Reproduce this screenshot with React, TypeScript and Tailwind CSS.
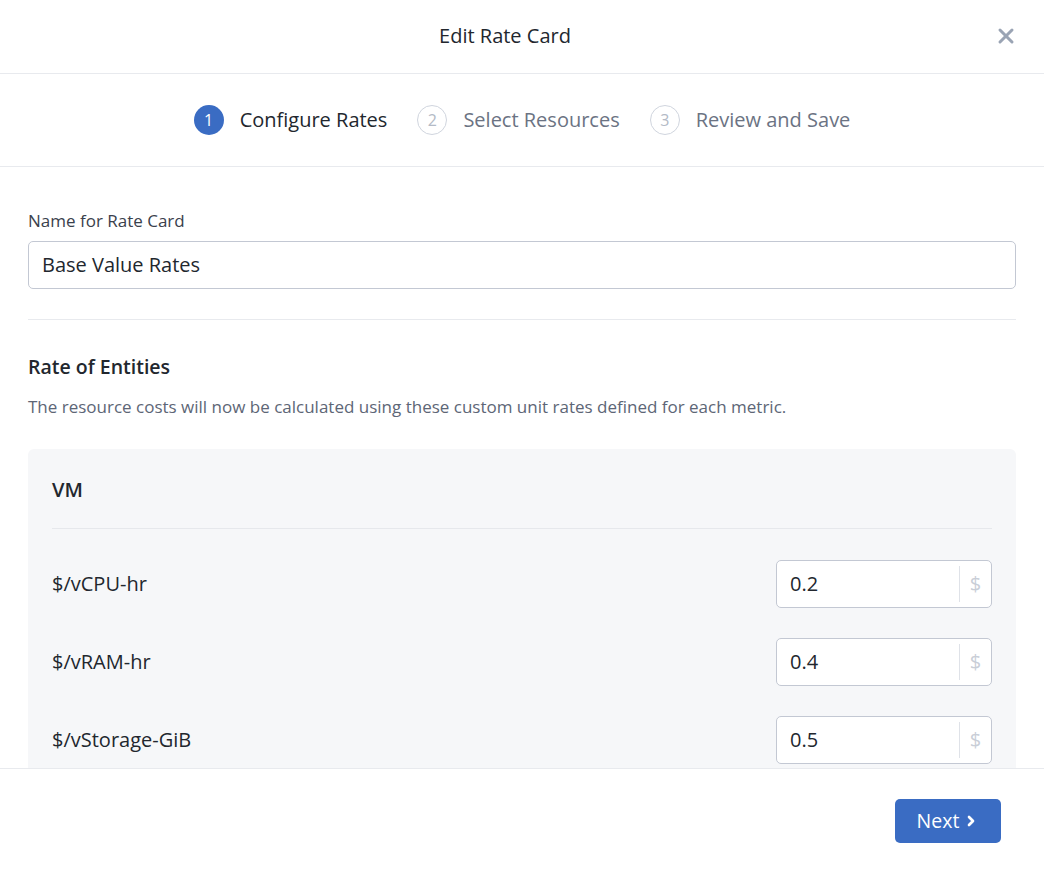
import { X, ChevronRight } from "lucide-react";

const steps = [
  { n: 1, label: "Configure Rates", active: true },
  { n: 2, label: "Select Resources", active: false },
  { n: 3, label: "Review and Save", active: false },
];

const rates = [
  { label: "$/vCPU-hr", value: "0.2" },
  { label: "$/vRAM-hr", value: "0.4" },
  { label: "$/vStorage-GiB", value: "0.5" },
];

function Stepper() {
  return (
    <div className="flex h-[93px] shrink-0 items-center justify-center gap-[30px] border-b border-[#e8eaee]">
      {steps.map((s) => (
        <div key={s.n} className="flex items-center gap-[16px]">
          {s.active ? (
            <span className="flex h-[30px] w-[30px] items-center justify-center rounded-full bg-[#3a6cc3] text-[16px] text-white">
              {s.n}
            </span>
          ) : (
            <span className="flex h-[30px] w-[30px] items-center justify-center rounded-full border-[1.5px] border-[#d0d5de] text-[16px] text-[#b3bac6]">
              {s.n}
            </span>
          )}
          <span
            className={
              s.active
                ? "text-[20px] leading-[28px] text-[#22272e]"
                : "text-[20px] leading-[28px] text-[#6b7383]"
            }
          >
            {s.label}
          </span>
        </div>
      ))}
    </div>
  );
}

function RateRow({ label, value }: { label: string; value: string }) {
  return (
    <div className="flex h-[78px] items-center justify-between">
      <span className="text-[20px] leading-[28px] text-[#22272e]">{label}</span>
      <div className="flex h-[48px] w-[216px] items-center rounded-[5px] border border-[#c3c8d3] bg-white">
        <span className="flex-1 pl-[13px] text-[20px] leading-[28px] text-[#22272e]">
          {value}
        </span>
        <span className="flex h-[36px] w-[32px] items-center justify-center border-l border-[#dfe2e8] text-[20px] text-[#c9ced7]">
          $
        </span>
      </div>
    </div>
  );
}

export default function App() {
  return (
    <div
      className="flex h-[872px] w-[1044px] flex-col overflow-hidden bg-white"
      style={{ fontFamily: "'Open Sans', Lato, sans-serif" }}
    >
      {/* Header */}
      <div className="relative flex h-[74px] shrink-0 items-center justify-center border-b border-[#e8eaee] pb-[2px] pr-[34px]">
        <h1 className="text-[20px] leading-[28px] text-[#22272e]">Edit Rate Card</h1>
        <button className="absolute right-[26px] top-[24px] text-[#9aa4b4]">
          <X className="h-[24px] w-[24px]" strokeWidth={3} />
        </button>
      </div>

      <Stepper />

      {/* Body */}
      <div className="flex-1 overflow-hidden px-[28px]">
        <div className="pt-[42px]">
          <label className="block text-[17px] leading-[24px] text-[#3a414c]">
            Name for Rate Card
          </label>
          <div className="mt-[8px] flex h-[48px] items-center rounded-[5px] border border-[#c3c8d3] px-[13px] text-[20px] leading-[28px] text-[#22272e]">
            Base Value Rates
          </div>
        </div>

        <div className="mt-[30px] border-t border-[#e8eaee]" />

        <h2 className="mt-[33px] text-[19.5px] font-semibold leading-[28px] text-[#22272e]">
          Rate of Entities
        </h2>
        <p className="mt-[14px] text-[17px] leading-[24px] text-[#5d6676]">
          The resource costs will now be calculated using these custom unit
          rates defined for each metric.
        </p>

        <div className="mt-[30px] rounded-[6px] bg-[#f6f7f9] px-[24px]">
          <div className="flex h-[80px] items-center border-b border-[#e6e8ec] pt-[2px] text-[20px] font-semibold leading-[28px] text-[#22272e]">
            VM
          </div>
          <div className="pt-[16px]">
            {rates.map((r) => (
              <RateRow key={r.label} {...r} />
            ))}
            <div className="h-[60px]" />
          </div>
        </div>
      </div>

      {/* Footer */}
      <div className="flex h-[104px] shrink-0 items-center justify-end border-t border-[#e8eaee] pr-[43px]">
        <button className="flex h-[44px] w-[106px] items-center justify-center gap-[4px] rounded-[5px] bg-[#3a6cc3] text-[19.5px] leading-[28px] text-white">
          Next
          <ChevronRight className="h-[16px] w-[16px]" strokeWidth={4} />
        </button>
      </div>
    </div>
  );
}
